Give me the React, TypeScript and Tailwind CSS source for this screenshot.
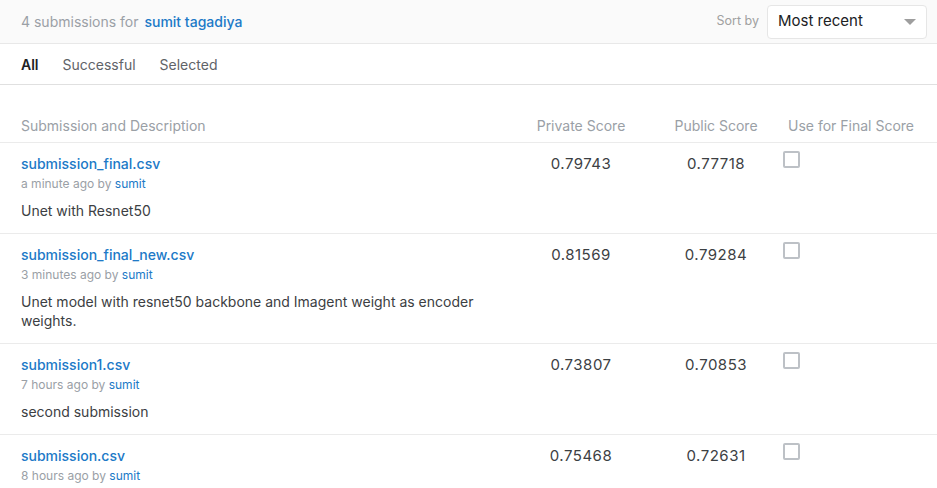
import React from "react";

const rows = [
  { name: "submission_final.csv", time: "a minute ago", desc: "Unet with Resnet50", priv: "0.79743", pub: "0.77718" },
  { name: "submission_final_new.csv", time: "3 minutes ago", desc: "Unet model with resnet50 backbone and Imagent weight as encoder weights.", priv: "0.81569", pub: "0.79284" },
  { name: "submission1.csv", time: "7 hours ago", desc: "second submission", priv: "0.73807", pub: "0.70853" },
  { name: "submission.csv", time: "8 hours ago", desc: "", priv: "0.75468", pub: "0.72631" },
];

export default function App() {
  return (
    <div className="w-[937px] h-[488px] overflow-hidden bg-white text-[#3c4043]" style={{ fontFamily: "Inter, 'Noto Sans', sans-serif" }}>
      <div className="h-[44px] bg-[#fafafa] border-b border-[#e8e8e8] flex items-center pl-[21px] pr-[10px]">
        <div className="text-[14px] text-[#9aa0a6]">
          4 submissions for <span className="text-[#2079c7] font-medium ml-[2px]">sumit tagadiya</span>
        </div>
        <div className="ml-auto flex items-center">
          <span className="text-[12.5px] text-[#a0a0a0] mr-[8px]">Sort by</span>
          <div className="w-[160px] h-[34px] bg-white border border-[#e6e6e6] rounded-[4px] flex items-center pl-[10px] pr-[10px]">
            <span className="text-[15px] text-[#202124]">Most recent</span>
            <svg className="ml-auto" width="12" height="6" viewBox="0 0 12 6"><path d="M0 0 L12 0 L6 6 Z" fill="#9e9e9e" /></svg>
          </div>
        </div>
      </div>
      <div className="h-[41px] border-b border-[#e0e0e0] flex items-center gap-6 pl-[21px] text-[14px]">
        <span className="font-semibold text-[#202124]">All</span>
        <span className="text-[#5f6368]">Successful</span>
        <span className="text-[#5f6368]">Selected</span>
      </div>
      <div className="grid grid-cols-[1fr_136px_134px_154px] pl-[21px] pt-[31px] pb-[6px] border-b border-[#ebebeb] text-[14px] text-[#9aa0a6] leading-[20px]">
        <div>Submission and Description</div>
        <div className="text-center">Private Score</div>
        <div className="text-center">Public Score</div>
        <div className="pl-[5px]">Use for Final Score</div>
      </div>
      {rows.map((r) => (
        <div key={r.name} className="grid grid-cols-[1fr_136px_134px_154px] pl-[21px] pt-[11px] pb-[13px] border-b border-[#ebebeb]">
          <div>
            <div className="text-[14px] leading-[20px] font-medium text-[#2079c7]">{r.name}</div>
            <div className="text-[12px] leading-[16px] mt-[2px] text-[#9aa0a6]">
              {r.time} by <span className="text-[#2079c7]">sumit</span>
            </div>
            {r.desc && <div className="text-[14px] leading-[19px] mt-[9px] text-[#3c4043] pr-[8px]">{r.desc}</div>}
          </div>
          <div className="text-center text-[15px] leading-[20px] tracking-[0.5px] text-[#3c4043]">{r.priv}</div>
          <div className="text-center text-[15px] leading-[20px] tracking-[0.5px] text-[#3c4043]">{r.pub}</div>
          <div>
            <div className="w-[17px] h-[17px] border-2 border-[#bdc1c6] rounded-[2px] -mt-[3px]" />
          </div>
        </div>
      ))}
    </div>
  );
}
